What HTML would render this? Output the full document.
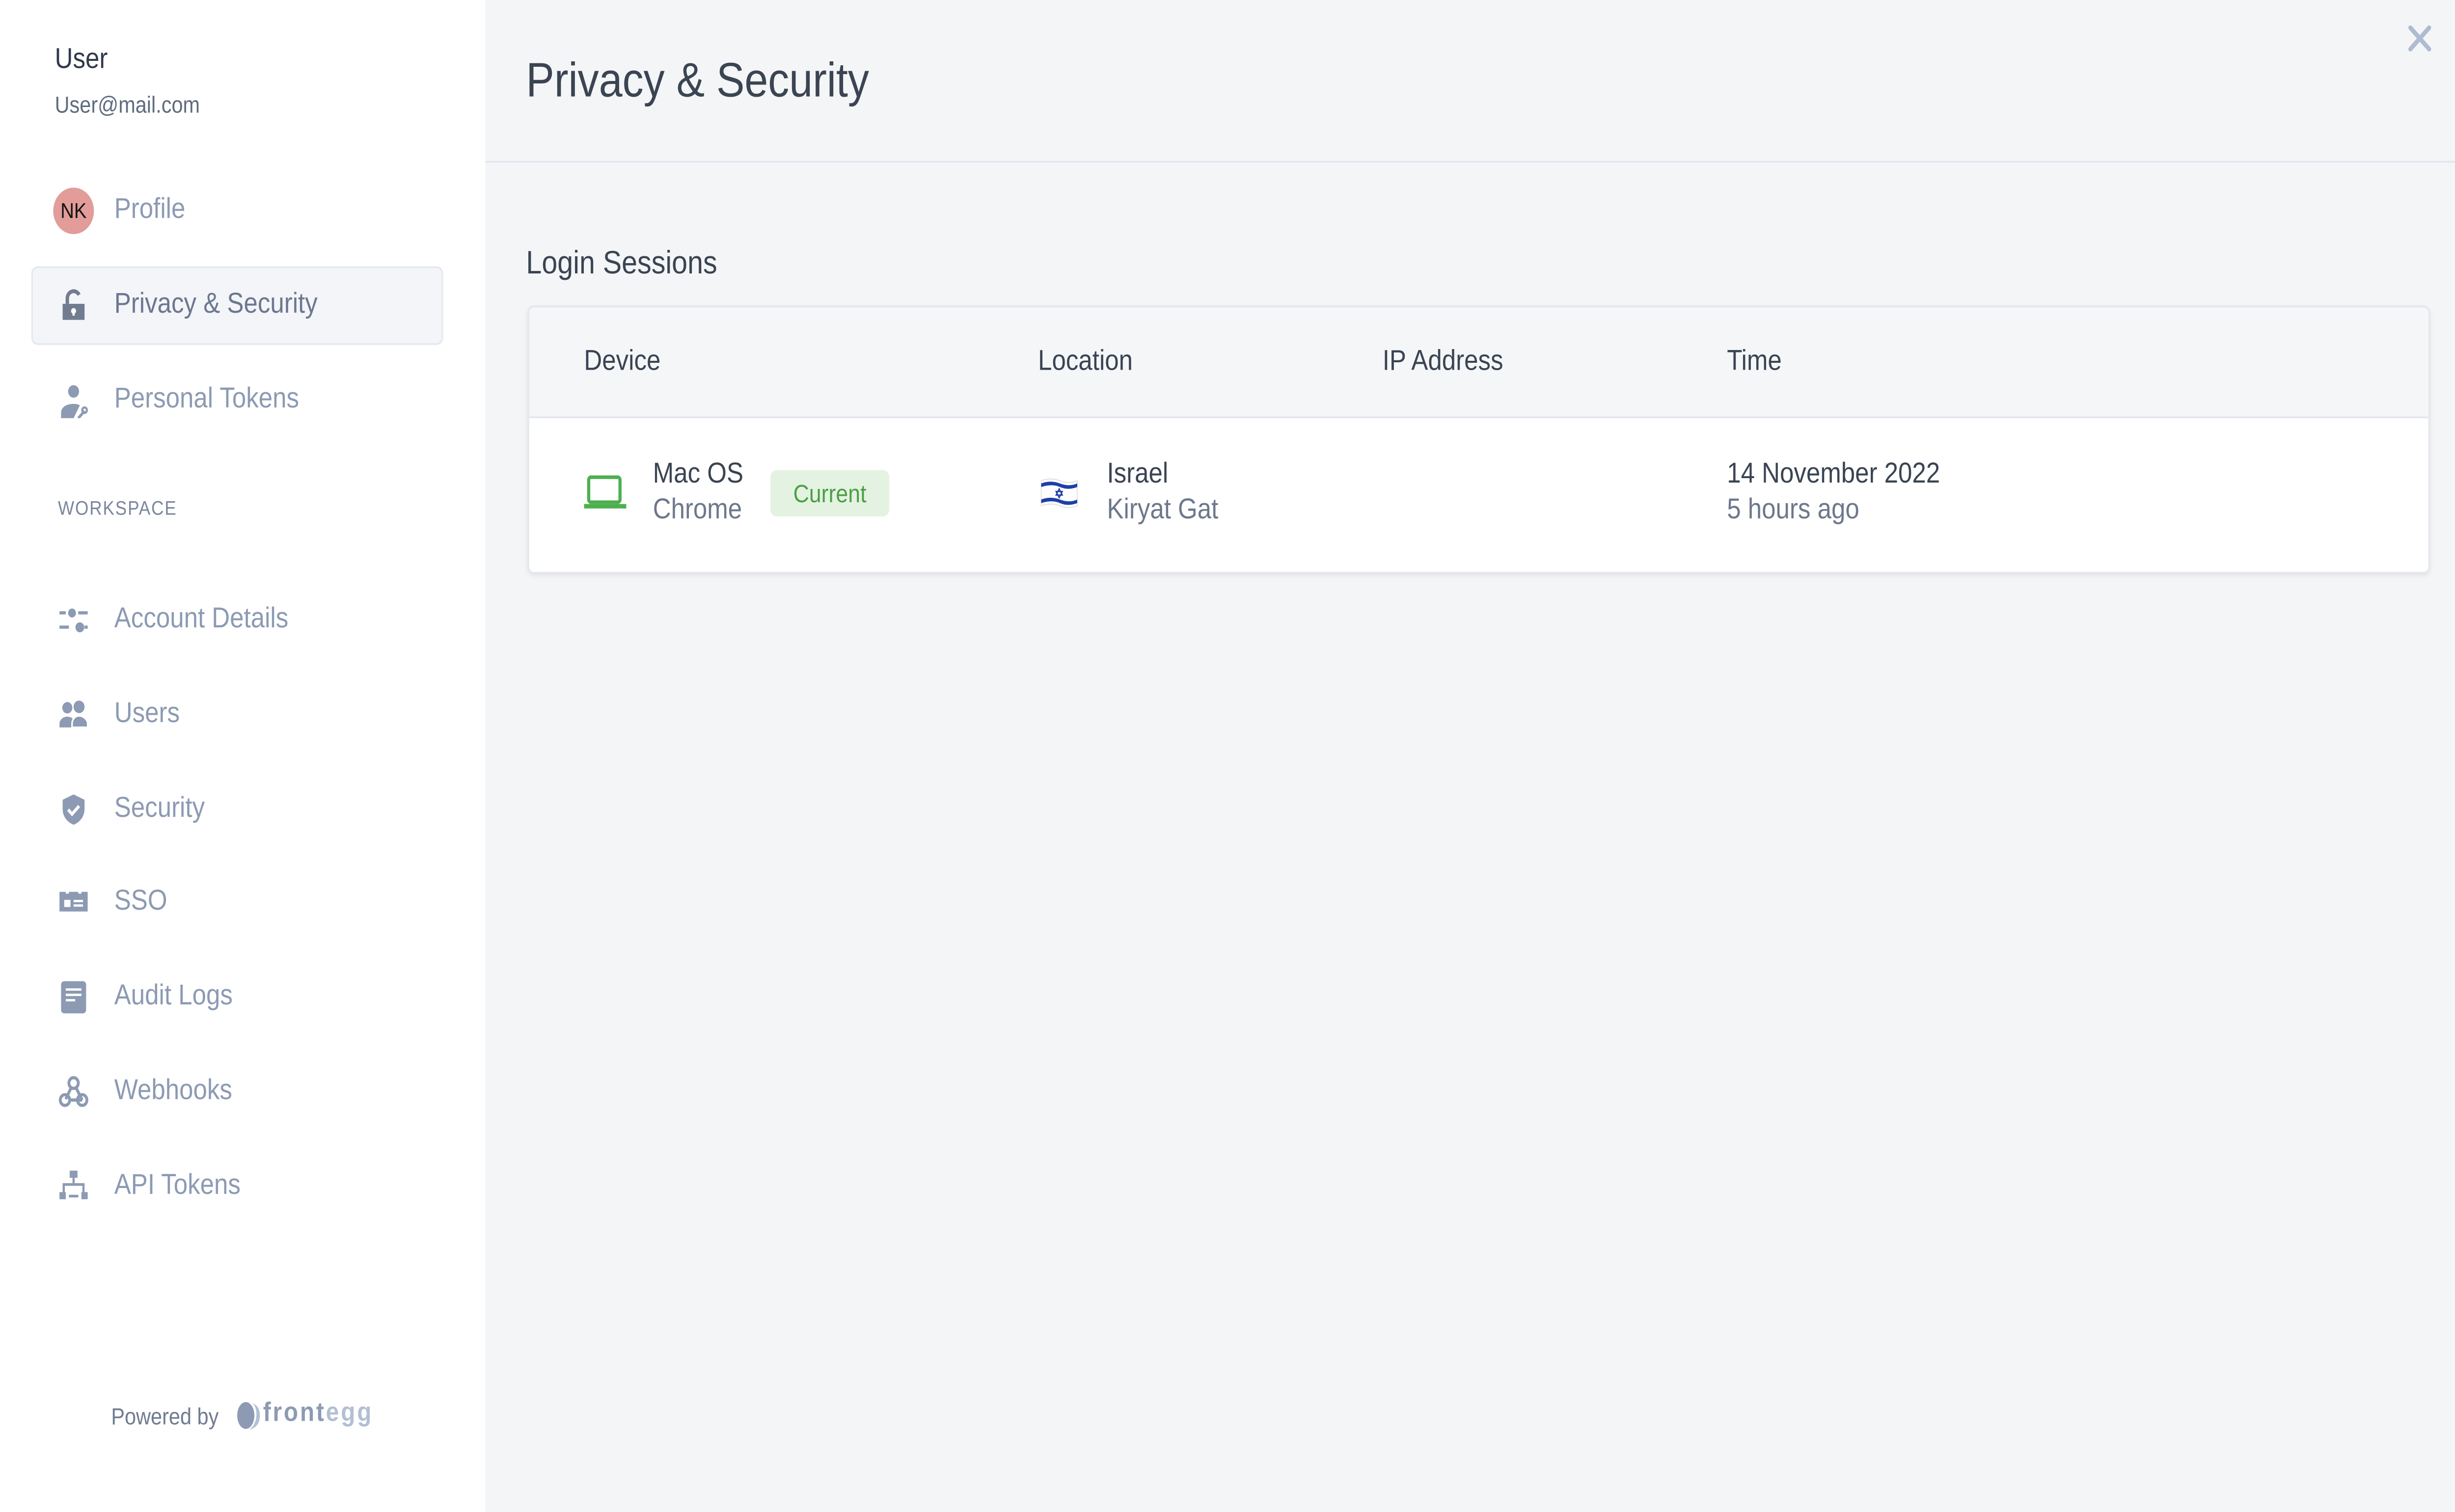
<!DOCTYPE html>
<html><head><meta charset="utf-8">
<style>
html,body{margin:0;padding:0;width:100%;height:100%;overflow:hidden;background:#f4f5f7;}
#s{position:absolute;left:0;top:0;width:1568px;height:846px;transform:scale(3.6403);transform-origin:0 0;font-family:"Liberation Sans",sans-serif;background:#f4f5f7;}
.a{position:absolute;white-space:nowrap;}
.side{position:absolute;left:0;top:0;width:310px;height:846px;background:#fff;}
.nav{position:absolute;left:73px;font-size:16px;color:#8c9ab3;line-height:20px;}
.ic{position:absolute;left:37px;width:20px;height:20px;}
.hd{font-size:16px;color:#3a4452;line-height:20px;}
</style></head><body><div id="s">
<div class="side">
  <div class="a" style="left:35px;top:25px;font-size:16px;color:#2f3a4a;">User</div>
  <div class="a" style="left:35px;top:51px;font-size:13px;color:#5f6b7f;">User@mail.com</div>

  <div class="a" style="left:34px;top:105px;width:26px;height:26px;border-radius:50%;background:#e29c99;color:#111;font-size:12px;line-height:26px;text-align:center;">NK</div>
  <div class="nav" style="top:108px;">Profile</div>

  <div class="a" style="left:20px;top:149px;width:261px;height:42px;background:#f4f5f8;border:1px solid #e4e8f0;border-radius:4px;"></div>
  <svg class="ic" style="top:161px" viewBox="0 0 20 20"><path d="M3 9h14v9H3z" fill="#717c91"/><path d="M6 9V6a4 4 0 0 1 7.5-2" stroke="#717c91" stroke-width="2.2" fill="none"/><circle cx="10" cy="13" r="1.6" fill="#fff"/><rect x="9.3" y="13" width="1.4" height="2.6" fill="#fff"/></svg>
  <div class="nav" style="top:161px;color:#6c7790;">Privacy &amp; Security</div>

  <svg class="ic" style="top:214px" viewBox="0 0 20 20"><circle cx="10" cy="5" r="3.5" fill="#8c9ab3"/><path d="M2 20v-3c0-3 3-5 8-5 2 0 3 .3 4 .8L10 20z" fill="#8c9ab3"/><path d="M13 20l4-4" stroke="#8c9ab3" stroke-width="1.6"/><circle cx="17" cy="15.5" r="1.5" fill="none" stroke="#8c9ab3" stroke-width="1.3"/></svg>
  <div class="nav" style="top:214px;">Personal Tokens</div>

  <div class="a" style="left:37px;top:279px;font-size:11px;color:#7a869c;letter-spacing:0.6px;">WORKSPACE</div>

  <svg class="ic" style="top:337px" viewBox="0 0 20 20"><rect x="1" y="5" width="4" height="1.8" fill="#8c9ab3"/><circle cx="9" cy="6" r="2.5" fill="#8c9ab3"/><rect x="13" y="5" width="6" height="1.8" fill="#8c9ab3"/><rect x="1" y="13" width="6" height="1.8" fill="#8c9ab3"/><circle cx="14" cy="14" r="2.8" fill="#8c9ab3"/><rect x="17" y="13" width="2" height="1.8" fill="#8c9ab3"/></svg>
  <div class="nav" style="top:337px;">Account Details</div>

  <svg class="ic" style="top:390px" viewBox="0 0 20 20"><circle cx="6" cy="6" r="3.2" fill="#8c9ab3"/><circle cx="13.5" cy="5.5" r="3.5" fill="#8c9ab3"/><path d="M1 17v-2c0-2 2-4 5-4s5 2 5 4v2z" fill="#8c9ab3"/><path d="M9 17v-2c0-2.5 2-4.5 4.5-4.5S19 12.5 19 15v2z" fill="#8c9ab3" stroke="#fff" stroke-width="1"/></svg>
  <div class="nav" style="top:390px;">Users</div>

  <svg class="ic" style="top:443px" viewBox="0 0 20 20"><path d="M10 1.5l7 3v5c0 4.5-3 7.5-7 9-4-1.5-7-4.5-7-9v-5z" fill="#8c9ab3"/><path d="M6.5 10l2.5 2.5 4.5-4.5" stroke="#fff" stroke-width="1.8" fill="none"/></svg>
  <div class="nav" style="top:443px;">Security</div>

  <svg class="ic" style="top:495px" viewBox="0 0 20 20"><path d="M1 4h4v1h2V4h6v1h2V4h4v11H1z" fill="#8c9ab3"/><rect x="4" y="8.5" width="4" height="4" fill="#fff"/><rect x="10" y="8.5" width="6" height="1.3" fill="#fff"/><rect x="10" y="11" width="6" height="1.3" fill="#fff"/></svg>
  <div class="nav" style="top:495px;">SSO</div>

  <svg class="ic" style="top:548px" viewBox="0 0 20 20"><rect x="2" y="1" width="16" height="18" rx="2" fill="#8c9ab3"/><rect x="5" y="5" width="10" height="1.3" fill="#fff"/><rect x="5" y="8" width="10" height="1.3" fill="#fff"/><rect x="5" y="11" width="6" height="1.3" fill="#fff"/></svg>
  <div class="nav" style="top:548px;">Audit Logs</div>

  <svg class="ic" style="top:601px" viewBox="0 0 20 20" fill="none" stroke="#8c9ab3" stroke-width="1.8"><circle cx="10" cy="5" r="3"/><circle cx="4.5" cy="14.5" r="3"/><circle cx="15.5" cy="14.5" r="3"/><path d="M8.5 7.5L5 14M7.5 14.5h8M11.5 7.5l4 7"/></svg>
  <div class="nav" style="top:601px;">Webhooks</div>

  <svg class="ic" style="top:654px" viewBox="0 0 20 20" fill="#8c9ab3"><rect x="7.5" y="1" width="5" height="4"/><rect x="9.3" y="5" width="1.4" height="3"/><rect x="3" y="8" width="14" height="1.5"/><rect x="3" y="9" width="1.4" height="4"/><rect x="15.6" y="9" width="1.4" height="4"/><rect x="1" y="13" width="4" height="4"/><rect x="15" y="13" width="4" height="4"/><rect x="7" y="14.5" width="6" height="1.5"/></svg>
  <div class="nav" style="top:654px;">API Tokens</div>

  <div class="a" style="left:71px;top:785px;font-size:13px;color:#6f7b90;">Powered by</div>
  <svg class="a" style="left:150px;top:783px" width="20" height="18" viewBox="0 0 20 18"><ellipse cx="7" cy="9" rx="5.5" ry="7.5" fill="#8c9ab3"/><path d="M11 2c4 2 4 12-2 15 5-1 7-4 7-8s-2-6-5-7z" fill="#b3bfd2"/></svg>
  <div class="a" style="left:168px;top:782px;font-size:15px;font-weight:bold;letter-spacing:1.2px;color:#8c9ab3;">front<span style="color:#b3bfd2">egg</span></div>
</div>

<div class="a" style="left:336px;top:30px;font-size:27px;color:#3b4452;">Privacy &amp; Security</div>
<div class="a" style="left:310px;top:90px;width:1258px;height:1px;background:#e2e6ec;"></div>
<svg class="a" style="left:1538px;top:14px" width="15" height="15" viewBox="0 0 15 15"><path d="M1.5 1.5l12 12M13.5 1.5l-12 12" stroke="#aebbd0" stroke-width="2.6" stroke-linecap="round"/></svg>

<div class="a" style="left:336px;top:137px;font-size:18px;color:#3a4452;">Login Sessions</div>

<div class="a" style="left:337px;top:171px;width:1213px;height:148px;border:1px solid #e3e7ee;border-radius:4px;background:#fff;box-shadow:0 1px 3px rgba(0,0,0,0.08);overflow:hidden;">
  <div style="position:absolute;left:0;top:0;width:100%;height:61px;background:#f5f6f8;border-bottom:1px solid #e3e7ee;"></div>
  <div class="a hd" style="left:35px;top:21px;">Device</div>
  <div class="a hd" style="left:325px;top:21px;">Location</div>
  <div class="a hd" style="left:545px;top:21px;">IP Address</div>
  <div class="a hd" style="left:765px;top:21px;">Time</div>

  <svg class="a" style="left:35px;top:94px" width="27" height="20" viewBox="0 0 27 20"><rect x="3" y="1" width="20" height="14" rx="1.5" fill="none" stroke="#4caf50" stroke-width="2"/><rect x="0" y="16" width="27" height="2.5" fill="#4caf50"/></svg>
  <div class="a hd" style="left:79px;top:84px;">Mac OS</div>
  <div class="a" style="left:79px;top:105px;font-size:16px;color:#6d788c;">Chrome</div>
  <div class="a" style="left:154px;top:91px;width:76px;height:26px;background:#e4f3e1;border-radius:4px;color:#4c9e46;font-size:14px;line-height:26px;text-align:center;">Current</div>

  <svg class="a" style="left:326px;top:95px" width="25" height="18" viewBox="0 0 25 18"><path d="M1 2q6-2 12 0t11 0v14q-6 2-11 0T1 16z" fill="#fff" stroke="#ddd" stroke-width="0.5"/><path d="M1 3.5q6-2 12 0t11 0v2q-6 2-11 0T1 5.5z" fill="#1d3fa8"/><path d="M1 12.5q6-2 12 0t11 0v2q-6 2-11 0T1 14.5z" fill="#1d3fa8"/><path d="M12.5 6.5l2 3.5h-4zM12.5 11.5l2-3.5h-4z" fill="none" stroke="#1d3fa8" stroke-width="0.7"/></svg>
  <div class="a hd" style="left:369px;top:84px;">Israel</div>
  <div class="a" style="left:369px;top:105px;font-size:16px;color:#6d788c;">Kiryat Gat</div>

  <div class="a hd" style="left:765px;top:84px;">14 November 2022</div>
  <div class="a" style="left:765px;top:105px;font-size:16px;color:#6d788c;">5 hours ago</div>
</div>
</div>
<script>
(function(){
  var w=window.innerWidth||document.documentElement.clientWidth||5708;
  var h=window.innerHeight||document.documentElement.clientHeight||3080;
  document.getElementById('s').style.transform='scale('+(w/1568)+','+(h/846)+')';
})();
</script>
</body></html>
